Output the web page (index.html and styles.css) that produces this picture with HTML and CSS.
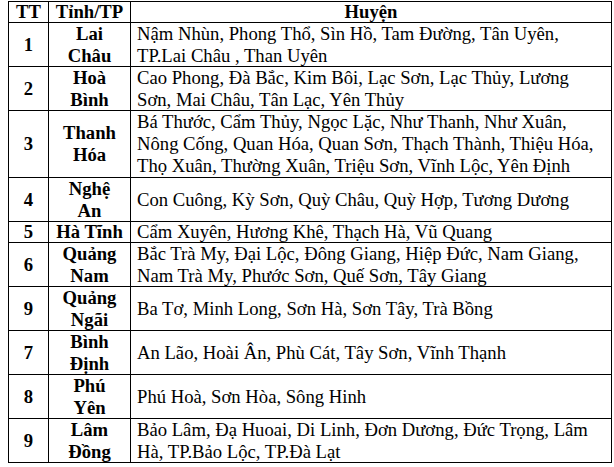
FILE: index.html
```html
<!DOCTYPE html>
<html lang="vi">
<head>
<meta charset="utf-8">
<link rel="stylesheet" href="styles.css">
</head>
<body>
<table class="list">
  <colgroup>
    <col class="c-tt">
    <col class="c-tinh">
    <col class="c-huyen">
  </colgroup>
  <tr class="single">
    <th>TT</th><th>Tỉnh/TP</th><th>Huyện</th>
  </tr>
  <tr>
    <td class="num">1</td><td class="prov">Lai<br>Châu</td>
    <td class="dist">Nậm Nhùn, Phong Thổ, Sìn Hồ, Tam Đường, Tân Uyên,<br>TP.Lai Châu , Than Uyên</td>
  </tr>
  <tr>
    <td class="num">2</td><td class="prov">Hoà<br>Bình</td>
    <td class="dist">Cao Phong, Đà Bắc, Kim Bôi, Lạc Sơn, Lạc Thủy, Lương<br>Sơn, Mai Châu, Tân Lạc, Yên Thủy</td>
  </tr>
  <tr class="triple">
    <td class="num">3</td><td class="prov">Thanh<br>Hóa</td>
    <td class="dist">Bá Thước, Cẩm Thủy, Ngọc Lặc, Như Thanh, Như Xuân,<br>Nông Cống, Quan Hóa, Quan Sơn, Thạch Thành, Thiệu Hóa,<br>Thọ Xuân, Thường Xuân, Triệu Sơn, Vĩnh Lộc, Yên Định</td>
  </tr>
  <tr>
    <td class="num">4</td><td class="prov">Nghệ<br>An</td>
    <td class="dist">Con Cuông, Kỳ Sơn, Quỳ Châu, Quỳ Hợp, Tương Dương</td>
  </tr>
  <tr class="single">
    <td class="num">5</td><td class="prov">Hà Tĩnh</td>
    <td class="dist">Cẩm Xuyên, Hương Khê, Thạch Hà, Vũ Quang</td>
  </tr>
  <tr>
    <td class="num">6</td><td class="prov">Quảng<br>Nam</td>
    <td class="dist">Bắc Trà My, Đại Lộc, Đông Giang, Hiệp Đức, Nam Giang,<br>Nam Trà My, Phước Sơn, Quế Sơn, Tây Giang</td>
  </tr>
  <tr>
    <td class="num">9</td><td class="prov">Quảng<br>Ngãi</td>
    <td class="dist">Ba Tơ, Minh Long, Sơn Hà, Sơn Tây, Trà Bồng</td>
  </tr>
  <tr>
    <td class="num">7</td><td class="prov">Bình<br>Định</td>
    <td class="dist">An Lão, Hoài Ân, Phù Cát, Tây Sơn, Vĩnh Thạnh</td>
  </tr>
  <tr>
    <td class="num">8</td><td class="prov">Phú<br>Yên</td>
    <td class="dist">Phú Hoà, Sơn Hòa, Sông Hinh</td>
  </tr>
  <tr>
    <td class="num">9</td><td class="prov">Lâm<br>Đồng</td>
    <td class="dist">Bảo Lâm, Đạ Huoai, Di Linh, Đơn Dương, Đức Trọng, Lâm<br>Hà, TP.Bảo Lộc, TP.Đà Lạt</td>
  </tr>
</table>
</body>
</html>
```
FILE: styles.css
```css
body {
  margin: 0;
  padding: 1px 0 0 8px;
  background: #ffffff;
  color: #000000;
  font-family: "Liberation Serif", "Times New Roman", serif;
}
.list {
  border-collapse: collapse;
  table-layout: fixed;
  width: 604px;
  font-family: "Liberation Serif", "Times New Roman", serif;
  font-size: 18.67px;
}
.c-tt { width: 40px; }
.c-tinh { width: 82px; }
.list th,
.list td {
  border: 1px solid #000000;
  padding: 0 6px;
  line-height: 21.5px;
  vertical-align: middle;
  white-space: nowrap;
}
.list th {
  font-weight: bold;
  text-align: center;
}
.list .single th,
.list .single td {
  line-height: 20px;
}
.list .triple td {
  line-height: 22px;
}
.num,
.prov {
  font-weight: bold;
  text-align: center;
}
.list .prov {
  padding: 0 2px;
}
.dist {
  text-align: left;
}
```
